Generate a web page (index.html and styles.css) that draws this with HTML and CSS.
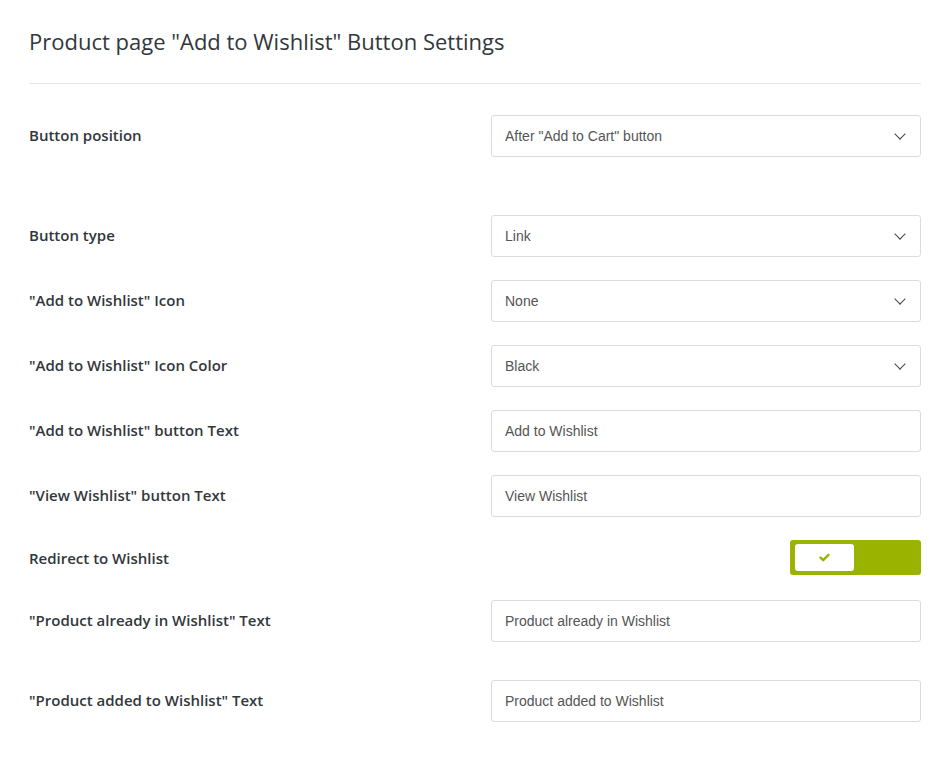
FILE: index.html
```html
<!DOCTYPE html>
<html lang="en">
<head>
  <meta charset="UTF-8">
  <meta name="viewport" content="width=device-width, initial-scale=1.0">
  <title>Wishlist Button Settings</title>
  <link rel="stylesheet" href="styles.css">
</head>
<body>
  <div class="settings">
    <h2>Product page "Add to Wishlist" Button Settings</h2>
    <hr>

    <div class="row row-wide">
      <label for="position">Button position</label>
      <div class="select">
        <select id="position">
          <option>After "Add to Cart" button</option>
        </select>
      </div>
    </div>

    <div class="row">
      <label for="type">Button type</label>
      <div class="select">
        <select id="type">
          <option>Link</option>
        </select>
      </div>
    </div>

    <div class="row">
      <label for="icon">"Add to Wishlist" Icon</label>
      <div class="select">
        <select id="icon">
          <option>None</option>
        </select>
      </div>
    </div>

    <div class="row">
      <label for="iconColor">"Add to Wishlist" Icon Color</label>
      <div class="select">
        <select id="iconColor">
          <option>Black</option>
        </select>
      </div>
    </div>

    <div class="row">
      <label for="addText">"Add to Wishlist" button Text</label>
      <input type="text" id="addText" value="Add to Wishlist">
    </div>

    <div class="row">
      <label for="viewText">"View Wishlist" button Text</label>
      <input type="text" id="viewText" value="View Wishlist">
    </div>

    <div class="row row-toggle">
      <label>Redirect to Wishlist</label>
      <div class="toggle-wrap">
        <div class="toggle">
          <span class="knob">
            <svg width="11" height="9" viewBox="0 0 11 9"><path d="M1.5 4.6 L4.2 7.2 L9.5 1.8" fill="none" stroke="#99b300" stroke-width="2.4" stroke-linecap="round" stroke-linejoin="round"/></svg>
          </span>
        </div>
      </div>
    </div>

    <div class="row row-mid">
      <label for="alreadyText">"Product already in Wishlist" Text</label>
      <input type="text" id="alreadyText" value="Product already in Wishlist">
    </div>

    <div class="row">
      <label for="addedText">"Product added to Wishlist" Text</label>
      <input type="text" id="addedText" value="Product added to Wishlist">
    </div>
  </div>
</body>
</html>
```

FILE: styles.css
```css
body {
  margin: 0;
  background: #fff;
  font-family: "Open Sans", sans-serif;
  color: #32373c;
}
.settings {
  width: 892px;
  margin-left: 29px;
  padding-top: 26px;
}
h2 {
  margin: 0;
  font-size: 22px;
  font-weight: 400;
  line-height: 30px;
  color: #32373c;
}
hr {
  border: none;
  border-top: 1px solid #e4e4e4;
  margin: 27px 0 31px;
}
.row {
  display: grid;
  grid-template-columns: 462px 430px;
  align-items: center;
  height: 42px;
  margin-bottom: 23px;
}
.row-wide {
  margin-bottom: 58px;
}
.row-toggle {
  height: 35px;
  margin-bottom: 25px;
}
.row-toggle label {
  padding-top: 3px;
}
.row-mid {
  margin-bottom: 38px;
}
label {
  font-size: 15px;
  font-weight: 600;
  padding-bottom: 2px;
}
input, select {
  box-sizing: border-box;
  width: 430px;
  height: 42px;
  padding: 0 13px;
  border: 1px solid #dcdcdc;
  border-radius: 3px;
  background: #fff;
  font-family: "Liberation Sans", Arial, sans-serif;
  font-size: 14px;
  color: #555;
  outline: none;
}
select {
  appearance: none;
  -webkit-appearance: none;
}
.select {
  position: relative;
}
.select::after {
  content: "";
  position: absolute;
  right: 17px;
  top: 15px;
  width: 7px;
  height: 7px;
  border-right: 1.5px solid #444;
  border-bottom: 1.5px solid #444;
  transform: rotate(45deg);
  pointer-events: none;
}
.toggle-wrap {
  display: flex;
  justify-content: flex-end;
}
.toggle {
  width: 131px;
  height: 35px;
  background: #99b300;
  border-radius: 3px;
  padding: 4px 5px;
  box-sizing: border-box;
}
.knob {
  display: flex;
  align-items: center;
  justify-content: center;
  width: 59px;
  height: 27px;
  background: #fff;
  border-radius: 3px;
}
```
